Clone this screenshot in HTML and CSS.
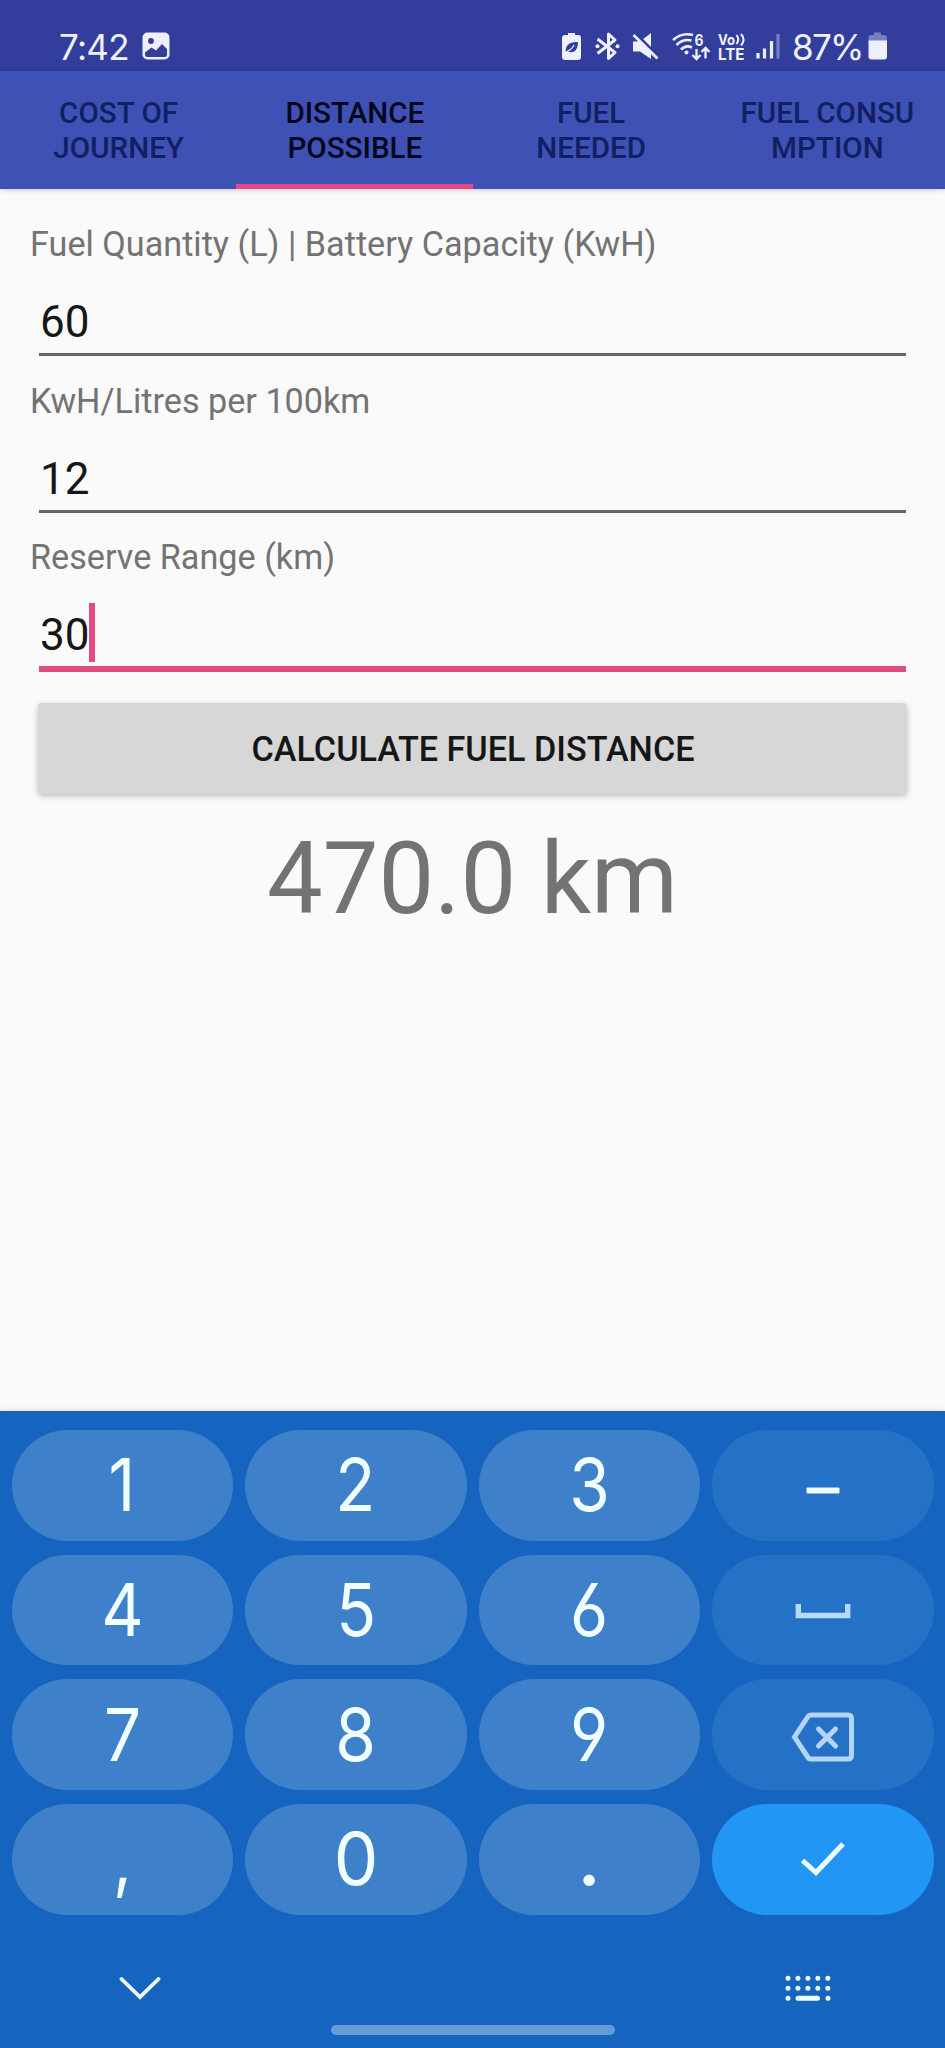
FILE: index.html
```html
<!DOCTYPE html>
<html lang="en">
<head>
<meta charset="utf-8">
<title>Fuel Calculator</title>
<link rel="stylesheet" href="styles.css">
</head>
<body>
<div class="screen">
  <header class="status">
    <div class="status-left">
      <span class="clock">7:42</span>
      <svg class="ic-photo" width="28" height="28" viewBox="0 0 28 28"><rect x="0.5" y="0.5" width="27" height="27" rx="5" fill="#eef0ff"/><circle cx="9" cy="9" r="2.9" fill="#333d9c"/><path d="M3 20.5L9.5 15.500L14 18.500L20 12L25 17V22.500Q25 25 22.500 25H5.500Q3 25 3 22.500Z" fill="#333d9c"/></svg>
    </div>
    <svg class="status-icons" width="240" height="48" viewBox="560 22 240 48" fill="none" stroke="#eef0ff">
      <path d="M567 35V33H574V35H577Q580 35 580 38V57Q580 60 577 60H564Q561 60 561 57V38Q561 35 564 35Z" fill="#eef0ff" stroke="none"/>
      <path d="M564.500 52C565 44 569 42 577 42C577 50 573 54 566.500 51.500Z" fill="#333d9c" stroke="none"/>
      <path d="M563 53C567 51 571 50 573 45" stroke="#eef0ff" stroke-width="1.200"/>
      <path d="M596.500 39L614 52.500L607.500 58.500V34L614 40L596.500 53.500" stroke-width="3" stroke-linejoin="round"/>
      <circle cx="596.500" cy="46.300" r="2" fill="#eef0ff" stroke="none"/><circle cx="616.500" cy="46.300" r="2" fill="#eef0ff" stroke="none"/>
      <path d="M632 41.500H639L650 33V59L639 51.500H632Z" fill="#eef0ff" stroke="none"/>
      <path d="M634 33L659 58" stroke="#333d9c" stroke-width="3"/>
      <path d="M632.500 35L656.500 58.500" stroke-width="2.800"/>
      <path d="M672 40Q681 32 692 35M675.500 45Q682 38.500 690.500 40.500M680 49.500Q685 44.500 691 47.500" stroke-width="2.600"/>
      <circle cx="685.500" cy="52.500" r="2" fill="#eef0ff" stroke="none"/>
      <path d="M695.500 49V59M691.500 55L695.500 59L699.500 55M704.500 58.500V48M700.500 52L704.500 48L708.500 52" stroke-width="2.300"/>
      <g fill="#eef0ff" stroke="none" class="net-text"><text x="693.500" y="45.500" font-size="16" textLength="9" lengthAdjust="spacingAndGlyphs">6</text><text x="717" y="44.500" font-size="14.500" textLength="17" lengthAdjust="spacingAndGlyphs">Vo</text><text x="717" y="60" font-size="15.500" textLength="26.500" lengthAdjust="spacingAndGlyphs">LTE</text></g>
      <path d="M735.500 35Q739 39.500 735.500 44M740 34Q745 39.500 740 45.500" stroke-width="2"/>
      <path d="M757 53V58.500M763.500 48.500V58.500M770.500 41V58.500" stroke-width="3.200"/><path d="M777 34V58.500" stroke="#7580c4" stroke-width="3.200"/>
    </svg>
    <span class="percent">87%</span>
    <svg class="ic-batt" width="20" height="28" viewBox="0 0 20 28"><path d="M0.500 9V6Q0.500 3 3.500 3H6V0.500H13V3H16Q19 3 19 6V9Z" fill="#7580c4"/><path d="M0.500 8.500H19V24.500Q19 27.500 16 27.500H3.500Q0.500 27.500 0.500 24.500Z" fill="#eef0ff"/></svg>
  </header>
  <nav class="tabs">
    <div class="tab">COST OF<br>JOURNEY</div>
    <div class="tab tab-active">DISTANCE<br>POSSIBLE</div>
    <div class="tab">FUEL<br>NEEDED</div>
    <div class="tab">FUEL CONSU<br>MPTION</div>
  </nav>
  <main class="form">
    <label class="label">Fuel Quantity (L) | Battery Capacity (KwH)</label>
    <div class="field">60</div>
    <label class="label">KwH/Litres per 100km</label>
    <div class="field">12</div>
    <label class="label">Reserve Range (km)</label>
    <div class="field field-focus">30<span class="caret"></span></div>
    <button class="calc">CALCULATE FUEL DISTANCE</button>
    <div class="result">470.0 km</div>
  </main>
  <section class="keyboard">
    <div class="keys">
      <div class="key"><span class="digit">1</span></div><div class="key"><span class="digit">2</span></div><div class="key"><span class="digit">3</span></div>
      <div class="key key-fn"><svg width="34" height="7" class="ic-minus"><rect x="0.500" y="0.500" width="33" height="6" rx="1" fill="#f0faff"/></svg></div>
      <div class="key"><span class="digit">4</span></div><div class="key"><span class="digit">5</span></div><div class="key"><span class="digit">6</span></div>
      <div class="key key-fn"><svg class="ic-space" width="56" height="16" viewBox="0 0 56 16"><path d="M3.300 1V12.500H52.700V1" fill="none" stroke="#b5d9f8" stroke-width="5.400"/></svg></div>
      <div class="key"><span class="digit">7</span></div><div class="key"><span class="digit">8</span></div><div class="key"><span class="digit">9</span></div>
      <div class="key key-fn"><svg class="ic-del" width="64" height="50" viewBox="0 0 64 50" fill="none" stroke="#b5d5f8" stroke-width="5"><path d="M19.500 3H57Q60.500 3 60.500 6.500V43.500Q60.500 47 57 47H19.500Q18 47 17 45.500L3.500 25L17 4.500Q18 3 19.500 3Z"/><path d="M27.500 17L44.500 34M44.500 17L27.500 34" stroke-linecap="round"/></svg></div>
      <div class="key"><span class="digit">,</span></div><div class="key"><span class="digit digit-zero">0</span></div><div class="key"><span class="digit digit-dot">.</span></div>
      <div class="key key-ok"><svg width="46" height="36" viewBox="0 0 46 36"><path d="M2.500 19.500L16 31.500L43 3" fill="none" stroke="#f0ffff" stroke-width="5"/></svg></div>
    </div>
    <div class="tools">
      <svg width="42" height="25" viewBox="0 0 42 25"><path d="M2.500 3L21 21L39.500 3" fill="none" stroke="#f0faff" stroke-width="3.800" stroke-linecap="round"/></svg>
      <svg width="46" height="27" viewBox="0 0 46 27" fill="none" stroke="#f0ffff" stroke-width="5" stroke-linecap="round"><path d="M3 3.300H43M3 13.300H43" stroke-dasharray="0 9.950"/><path d="M3 23.200H3.010M13 23.200H32.500M43 23.200H43.010"/></svg>
    </div>
    <div class="home"></div>
  </section>
</div>
</body>
</html>
```
FILE: styles.css
```css
* { box-sizing: border-box; }
body { margin: 0; font-family: Roboto, "Liberation Sans", sans-serif; }
.screen { width: 945px; height: 2048px; display: flex; flex-direction: column; background: #fafafa; overflow: hidden; }
.status { height: 71px; flex: none; display: flex; padding: 32px 57px 0 59px; background: #333d9c; border-bottom: 5px solid #303c9c; color: #f0f1ff; }
.status-left { display: flex; flex: 1; gap: 14px; }
.clock, .percent { font: 400 35px/30px Inter, sans-serif; letter-spacing: -0.700px; }
.clock { width: 69px; }
.percent { width: 74px; margin-left: -9px; margin-right: 2px; letter-spacing: -1.700px; white-space: nowrap; }
.status-icons { flex: none; margin-top: -10px; }
.net-text { font-family: Inter, sans-serif; font-weight: 700; }
.tabs { height: 118px; flex: none; display: grid; grid-template-columns: repeat(4, 1fr); background: #3f51b5; box-shadow: 0 1px 5px rgba(0,0,0,.2); }
.tab { padding: 25px 0 0 1px; text-align: center; font-size: 29.600px; line-height: 35px; font-weight: 500; color: #122062; }
.tab-active { color: #03071c; border-bottom: 5px solid #ea4885; }
.form { flex: 1; padding: 32px 30px 0; display: flex; flex-direction: column; }
.label { height: 46px; font-size: 34.200px; line-height: 46px; color: #737373; }
.field { height: 89px; margin: 0 9px 21.500px; border-bottom: 3px solid #666; font-size: 44px; line-height: 52px; padding: 29px 0 0 1px; color: #161616; display: flex; }
.field-focus { height: 92px; border-bottom: 6px solid #e04d82; margin-bottom: 31px; }
.caret { width: 6px; height: 59px; margin-top: -6px; background: #e34b83; }
.calc { height: 91px; margin: 0 8px; padding: 0 0 0 1px; border: 0; border-radius: 4px; background: #d7d7d7; box-shadow: 0 2px 6px rgba(0,0,0,.25); font: 500 34.200px/40px Roboto, sans-serif; color: #161616; }
.result { margin-top: 27px; font-size: 99.200px; line-height: 116px; text-align: center; color: #737373; }
.keyboard { height: 637px; flex: none; background: #1565c0; padding: 19px 11.500px 0; box-shadow: 0 0 6px rgba(0,0,0,.15); }
.keys { display: grid; grid-template-columns: repeat(4, 221.500px); grid-auto-rows: 110.800px; gap: 13.850px 12px; }
.key { display: flex; align-items: center; justify-content: center; border-radius: 56px; background: #3f80ca; color: #f0ffff; }
.digit { font: 400 73px/110px Inter, sans-serif; font-feature-settings: "cv03", "cv04"; transform: scaleX(.9); }
.digit-zero { transform: scaleX(.97); }
.digit-dot { font-weight: 600; transform: none; }
.key-fn { background: #2571c6; }
.key-ok { background: #2196f5; }
.ic-minus { margin-top: 10px; }
.ic-space { margin-top: 2px; }
.ic-del { margin-top: 5px; }
.tools { display: flex; justify-content: space-between; align-items: center; padding: 0 103px 0 107px; margin-top: 60px; height: 27px; }
.home { width: 284px; height: 10px; border-radius: 5px; background: #659cd7; margin: 23px auto 0; }
```
